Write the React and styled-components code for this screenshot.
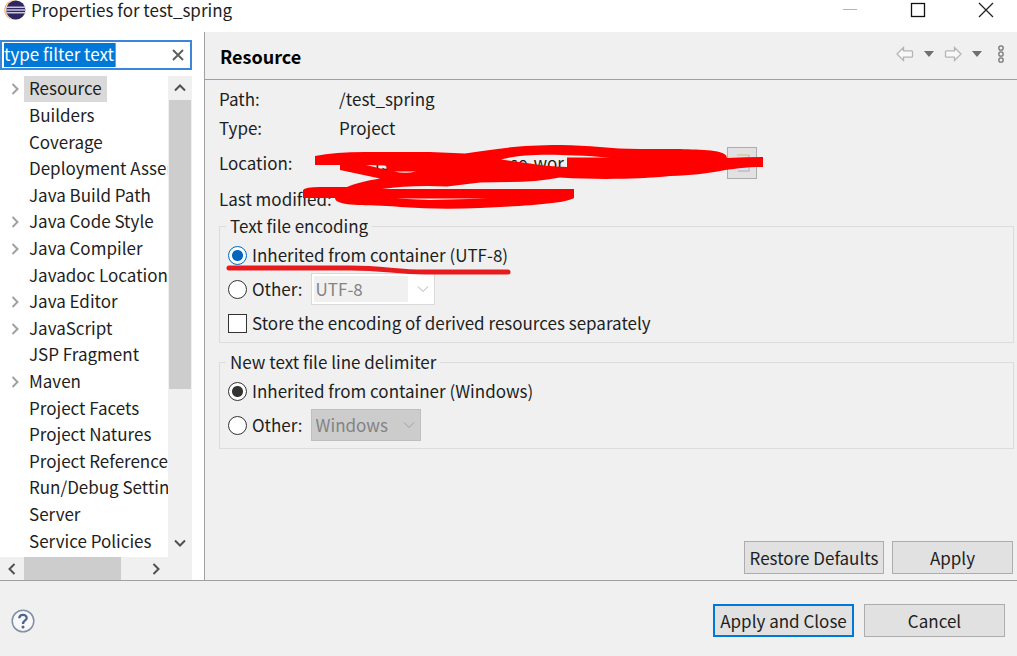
import React from "react";
import styled, { createGlobalStyle, css } from "styled-components";

const Global = createGlobalStyle`
  * { box-sizing: border-box; }
  body { margin: 0; background: #f0f0f0; }
  body, button, input, select {
    font-family: "Noto Sans CJK KR", "Noto Sans", sans-serif;
    font-size: 17px;
    line-height: 24px;
    color: #1e1e1e;
  }
`;

const Dialog = styled.div`
  display: flex;
  flex-direction: column;
  min-height: 100vh;
`;

const TitleBar = styled.header`
  display: flex;
  align-items: center;
  justify-content: space-between;
  height: 32px;
  padding: 0 19px 12px 4px;
  background: #fff;
`;

const WindowTitle = styled.div`
  display: flex;
  align-items: center;
  gap: 5px;
`;

const WindowControls = styled.div`
  display: flex;
  gap: 44px;
`;

const IconButton = styled.button`
  display: flex;
  flex: none;
  align-items: center;
  justify-content: center;
  width: ${(p) => p.$w || 24}px;
  height: ${(p) => p.$h || 24}px;
  padding: 0;
  border: 0;
  background: transparent;
`;

const Body = styled.div`
  display: flex;
  flex: 1;
  border-bottom: 1px solid #a0a0a0;
`;

const Sidebar = styled.aside`
  display: flex;
  flex: none;
  flex-direction: column;
  width: 204px;
  padding: 8px 12px 0 0;
  background: #fff;
`;

const Filter = styled.label`
  display: flex;
  align-items: center;
  justify-content: space-between;
  height: 30px;
  margin-bottom: 6px;
  padding: 0 0 0 2px;
  border: 2px solid #3a86d8;
`;

const FilterInput = styled.input`
  width: 112px;
  height: 24px;
  padding: 0 0 2px;
  border: 0;
  border-right: 1px solid #e8813a;
  outline: 0;
  background: #0078d7;
  color: #fff;
`;

const TreeArea = styled.div`
  display: grid;
  flex: 1;
  grid-template-columns: minmax(0, 1fr) 24px;
  grid-template-rows: 1fr 23px;
`;

const Tree = styled.ul`
  display: grid;
  grid-auto-rows: 1fr;
  margin: 0;
  padding: 0 0 2px 8px;
  overflow: hidden;
  list-style: none;
`;

const TreeItem = styled.li`
  display: flex;
  align-items: center;
  white-space: nowrap;
`;

const Twisty = styled.span`
  display: flex;
  flex: none;
  width: 16px;
`;

const TreeLabel = styled.span`
  padding: 0 5px 2px;
  line-height: 24px;
  background: ${(p) => (p.$selected ? "#d9d9d9" : "transparent")};
`;

const ScrollBar = styled.div`
  display: flex;
  flex-direction: ${(p) => (p.$vertical ? "column" : "row")};
  justify-content: space-between;
  background: #f0f0f0;
`;

const ScrollThumb = styled.div`
  background: #cdcdcd;
  ${(p) =>
    p.$vertical
      ? css`flex: 0 0 60%; margin: 0 1px 0 1px;`
      : css`flex: 0 0 58%;`}
`;

const ScrollSpace = styled.div`
  flex: 1;
`;

const Main = styled.main`
  display: flex;
  flex: 1;
  flex-direction: column;
  min-width: 0;
  border-left: 1px solid #a0a0a0;
`;

const PageHeader = styled.div`
  display: flex;
  align-items: center;
  justify-content: space-between;
  height: 48px;
  padding: 0 6px 0 15px;
  border-bottom: 1px solid #a0a0a0;
`;

const PageTitle = styled.h1`
  margin: 0;
  font-size: 18px;
  font-weight: 700;
  color: #000;
`;

const PageTools = styled.div`
  display: flex;
  align-items: center;
  gap: 4px;
  padding-bottom: 4px;
`;

const Page = styled.div`
  position: relative;
  display: flex;
  flex: 1;
  flex-direction: column;
  padding: 4px 3px 6px 14px;
`;

const Properties = styled.dl`
  display: grid;
  grid-template-columns: 120px 1fr;
  grid-template-rows: 29px 29px 42px 30px;
  align-items: center;
  margin: 0;
`;

const Term = styled.dt`
  white-space: nowrap;
`;

const Value = styled.dd`
  display: flex;
  align-items: center;
  margin: 0;
`;

const LocationText = styled.span`
  display: grid;
  flex: none;
  grid-template-columns: 135px 1fr;
  width: 388px;
  padding-left: 36px;
  white-space: nowrap;
`;

const LocationButton = styled(IconButton)`
  border: 1px solid #adadad;
  background: #e1e1e1;
`;

const Group = styled.fieldset`
  min-width: 0;
  margin: 0 0 7px;
  padding: 0 8px ${(p) => p.$pb}px;
  border: 1px solid #dcdcdc;
`;

const Legend = styled.legend`
  margin-left: -2px;
  padding: 0 4px;
`;

const OptionRow = styled.div`
  display: flex;
  align-items: center;
  gap: 8px;
  height: 34px;
`;

const Option = styled.label`
  display: flex;
  align-items: center;
  gap: 5px;
  white-space: nowrap;
`;

const Radio = styled.input`
  appearance: none;
  width: 19px;
  height: 19px;
  margin: 0;
  border: 1px solid ${(p) => (p.$accent ? "#0067c0" : "#333")};
  border-radius: 50%;
  background: #fff;
  &:checked {
    background: radial-gradient(circle, ${(p) => (p.$accent ? "#0067c0" : "#333")} 5px, #fff 6px);
  }
`;

const CheckBox = styled.input`
  appearance: none;
  width: 19px;
  height: 19px;
  margin: 0;
  border: 1px solid #333;
  background: #fff;
`;

const SelectBox = styled.div`
  display: grid;
  align-items: center;
  width: ${(p) => p.$w}px;
  height: 32px;
  border: 1px solid ${(p) => (p.$dark ? "#bfbfbf" : "#d9d9d9")};
  background: ${(p) => (p.$dark ? "#cccccc" : "#fff")};
  & > * { grid-area: 1 / 1; }
  & > svg { justify-self: end; margin-right: 4px; }
`;

const Select = styled.select`
  appearance: none;
  height: 26px;
  margin: 0 26px 0 2px;
  padding: 0 2px;
  border: 0;
  background: ${(p) => (p.$dark ? "transparent" : "#f0f0f0")};
  color: #838383;
  opacity: 1;
`;

const PageActions = styled.div`
  display: flex;
  justify-content: flex-end;
  gap: 8px;
  margin-top: auto;
  padding-right: 1px;
`;

const Button = styled.button`
  width: ${(p) => p.$w || 141}px;
  height: 33px;
  padding: 0;
  border: ${(p) => (p.$primary ? "2px solid #0078d7" : "1px solid #adadad")};
  background: #e1e1e1;
  white-space: nowrap;
`;

const Footer = styled.footer`
  display: flex;
  align-items: center;
  justify-content: space-between;
  height: 75px;
  padding: 4px 12px 0 10px;
`;

const FooterActions = styled.div`
  display: flex;
  gap: 10px;
`;

const Markup = styled.svg`
  position: absolute;
  top: 0;
  left: 0;
  pointer-events: none;
`;

function Chevron({ dir, size = 14, color = "#505050", stroke = 2 }) {
  const d = {
    up: "M2 9.500 7 4.500 12 9.500",
    down: "M2 4.500 7 9.500 12 4.500",
    left: "M9.500 2 4.500 7 9.500 12",
    right: "M4.500 2 9.500 7 4.500 12",
  }[dir];
  return (
    <svg width={size} height={size} viewBox="0 0 14 14" fill="none" stroke={color} strokeWidth={stroke}>
      <path d={d} />
    </svg>
  );
}

function EclipseLogo() {
  return (
    <svg width="22" height="22" viewBox="0 0 22 22">
      <circle cx="10" cy="11" r="9.800" fill="#f7a85a" />
      <circle cx="11" cy="11" r="9.800" fill="#fbe6d0" />
      <circle cx="11.800" cy="11" r="9.600" fill="#2f2560" />
      <path d="M2.500 8.300h19M2 11h20M2.500 13.700h19" stroke="#c9c5dc" strokeWidth="1.600" />
    </svg>
  );
}

function HistoryArrow({ flip }) {
  return (
    <svg width="18" height="16" viewBox="0 0 18 16" fill="#f8f8f8" stroke="#b4b4b4" strokeWidth="1.300">
      <path
        transform={flip ? "translate(18 0) scale(-1 1)" : undefined}
        d="M1 8 7.500 1.500V4.800H15.500Q16.500 4.800 16.500 5.800V10.200Q16.500 11.200 15.500 11.200H7.500V14.500Z"
      />
    </svg>
  );
}

function Caret() {
  return (
    <svg width="12" height="8" viewBox="0 0 12 8">
      <path d="M1 1H11L6 7Z" fill="#707070" />
    </svg>
  );
}

const pages = [
  ["Resource", true],
  ["Builders"],
  ["Coverage"],
  ["Deployment Assembly"],
  ["Java Build Path"],
  ["Java Code Style", true],
  ["Java Compiler", true],
  ["Javadoc Location"],
  ["Java Editor", true],
  ["JavaScript", true],
  ["JSP Fragment"],
  ["Maven", true],
  ["Project Facets"],
  ["Project Natures"],
  ["Project References"],
  ["Run/Debug Settings"],
  ["Server"],
  ["Service Policies"],
];

export default function App() {
  return (
    <Dialog>
      <Global />
      <TitleBar>
        <WindowTitle>
          <EclipseLogo />
          Properties for test_spring
        </WindowTitle>
        <WindowControls>
          <IconButton aria-label="Minimize">
            <svg width="16" height="16"><path d="M1 7.500H15" stroke="#b5b5b5" /></svg>
          </IconButton>
          <IconButton aria-label="Maximize">
            <svg width="16" height="16"><rect x="1.500" y="1.500" width="13" height="13" fill="none" stroke="#111" strokeWidth="1.300" /></svg>
          </IconButton>
          <IconButton aria-label="Close">
            <svg width="16" height="16"><path d="M1 1 15 15M15 1 1 15" stroke="#222" strokeWidth="1.300" /></svg>
          </IconButton>
        </WindowControls>
      </TitleBar>

      <Body>
        <Sidebar>
          <Filter>
            <FilterInput aria-label="Filter" defaultValue="type filter text" />
            <IconButton aria-label="Clear">
              <svg width="12" height="12"><path d="M1 1 11 11M11 1 1 11" stroke="#606060" strokeWidth="2" /></svg>
            </IconButton>
          </Filter>
          <TreeArea>
            <Tree>
              {pages.map(([name, expandable], i) => (
                <TreeItem key={name}>
                  <Twisty>{expandable && <Chevron dir="right" color="#a0a0a0" />}</Twisty>
                  <TreeLabel $selected={i === 0}>{name}</TreeLabel>
                </TreeItem>
              ))}
            </Tree>
            <ScrollBar $vertical>
              <IconButton aria-label="Scroll up"><Chevron dir="up" /></IconButton>
              <ScrollThumb $vertical />
              <ScrollSpace />
              <IconButton aria-label="Scroll down" $h={28}><Chevron dir="down" /></IconButton>
            </ScrollBar>
            <ScrollBar>
              <IconButton aria-label="Scroll left"><Chevron dir="left" /></IconButton>
              <ScrollThumb />
              <ScrollSpace />
              <IconButton aria-label="Scroll right"><Chevron dir="right" /></IconButton>
            </ScrollBar>
            <ScrollBar />
          </TreeArea>
        </Sidebar>

        <Main>
          <PageHeader>
            <PageTitle>Resource</PageTitle>
            <PageTools>
              <IconButton aria-label="Back" $w={20}><HistoryArrow /></IconButton>
              <IconButton aria-label="Back history" $w={20}><Caret /></IconButton>
              <IconButton aria-label="Forward" $w={20}><HistoryArrow flip /></IconButton>
              <IconButton aria-label="Forward history" $w={20}><Caret /></IconButton>
              <IconButton aria-label="View menu" $w={20}>
                <svg width="8" height="20" fill="none" stroke="#777" strokeWidth="1.300">
                  <circle cx="4" cy="4" r="2.200" />
                  <circle cx="4" cy="10" r="2.200" />
                  <circle cx="4" cy="16" r="2.200" />
                </svg>
              </IconButton>
            </PageTools>
          </PageHeader>

          <Page>
            <Properties>
              <Term>Path:</Term>
              <Value>/test_spring</Value>
              <Term>Type:</Term>
              <Value>Project</Value>
              <Term>Location:</Term>
              <Value>
                <LocationText>
                  <span>rs</span>
                  <span>se-wor</span>
                </LocationText>
                <LocationButton aria-label="Show in system explorer" $w={30} $h={32}>
                  <svg width="18" height="20" fill="none" strokeWidth="1.500">
                    <path d="M4 2H16" stroke="#dcc88c" />
                    <path d="M16 2V18H5" stroke="#b9bdc9" />
                    <path d="M7 14H14" stroke="#c5d5f2" strokeWidth="3" />
                  </svg>
                </LocationButton>
              </Value>
              <Term>Last modified:</Term>
              <Value />
            </Properties>

            <Group $pb={2}>
              <Legend>Text file encoding</Legend>
              <OptionRow>
                <Option><Radio type="radio" name="encoding" defaultChecked $accent />Inherited from container (UTF-8)</Option>
              </OptionRow>
              <OptionRow>
                <Option><Radio type="radio" name="encoding" />Other:</Option>
                <SelectBox $w={124}>
                  <Select aria-label="Encoding" disabled><option>UTF-8</option></Select>
                  <Chevron dir="down" color="#b0b0b0" stroke={1} />
                </SelectBox>
              </OptionRow>
              <OptionRow>
                <Option><CheckBox type="checkbox" />Store the encoding of derived resources separately</Option>
              </OptionRow>
            </Group>

            <Group $pb={6}>
              <Legend>New text file line delimiter</Legend>
              <OptionRow>
                <Option><Radio type="radio" name="delimiter" defaultChecked />Inherited from container (Windows)</Option>
              </OptionRow>
              <OptionRow>
                <Option><Radio type="radio" name="delimiter" />Other:</Option>
                <SelectBox $w={110} $dark>
                  <Select aria-label="Line delimiter" disabled $dark><option>Windows</option></Select>
                  <Chevron dir="down" color="#a0a0a0" stroke={1} />
                </SelectBox>
              </OptionRow>
            </Group>

            <PageActions>
              <Button $w={140}>Restore Defaults</Button>
              <Button $w={121}>Apply</Button>
            </PageActions>

            <Markup width="600" height="240" viewBox="205 80 600 240">
              <path
                fill="#ff0000"
                fillRule="evenodd"
                d="M315 156Q335 152 365 152H430L465 153.500C490 150 515 145 560 145C590 145 610 149 640 149H680C700 150 727 149 727 158Q745 157 763 157V167C725 167 715 175 670 176C640 179 600 180 560 177.500Q535 182 510 182L480 182.500 447 186.500Q410 185 382 189H574V198C565 204 520 206 480 208Q440 210 400 207C380 204 335 208 335 198H303V190Q305 187 320 187H347C357 183 365 181 380 178.500L340 170V165H315ZM366 165 386 165.500 387 170ZM394 171.500Q405 174 416 171.500ZM501 159.500C520 154 550 153 610 157.500H567V167Q545 166 530 163.500ZM396 198.500H488L430 200Z"
              />
              <path d="M229 268H350C385 268 395 272 425 272H508" fill="none" stroke="#e71b1e" strokeWidth="5" strokeLinecap="round" />
            </Markup>
          </Page>
        </Main>
      </Body>

      <Footer>
        <IconButton aria-label="Help" $w={26} $h={26}>
          <svg width="24" height="24" fill="none">
            <circle cx="12" cy="12" r="10.800" fill="#f7f8fa" stroke="#8490a6" strokeWidth="1.500" />
            <path d="M8.300 9.300C8.300 4.600 15.700 4.800 15.700 8.900C15.700 11.500 12 11.500 12 15" stroke="#52648a" strokeWidth="2.300" />
            <circle cx="12" cy="18" r="1.500" fill="#52648a" />
          </svg>
        </IconButton>
        <FooterActions>
          <Button $primary>Apply and Close</Button>
          <Button>Cancel</Button>
        </FooterActions>
      </Footer>
    </Dialog>
  );
}
